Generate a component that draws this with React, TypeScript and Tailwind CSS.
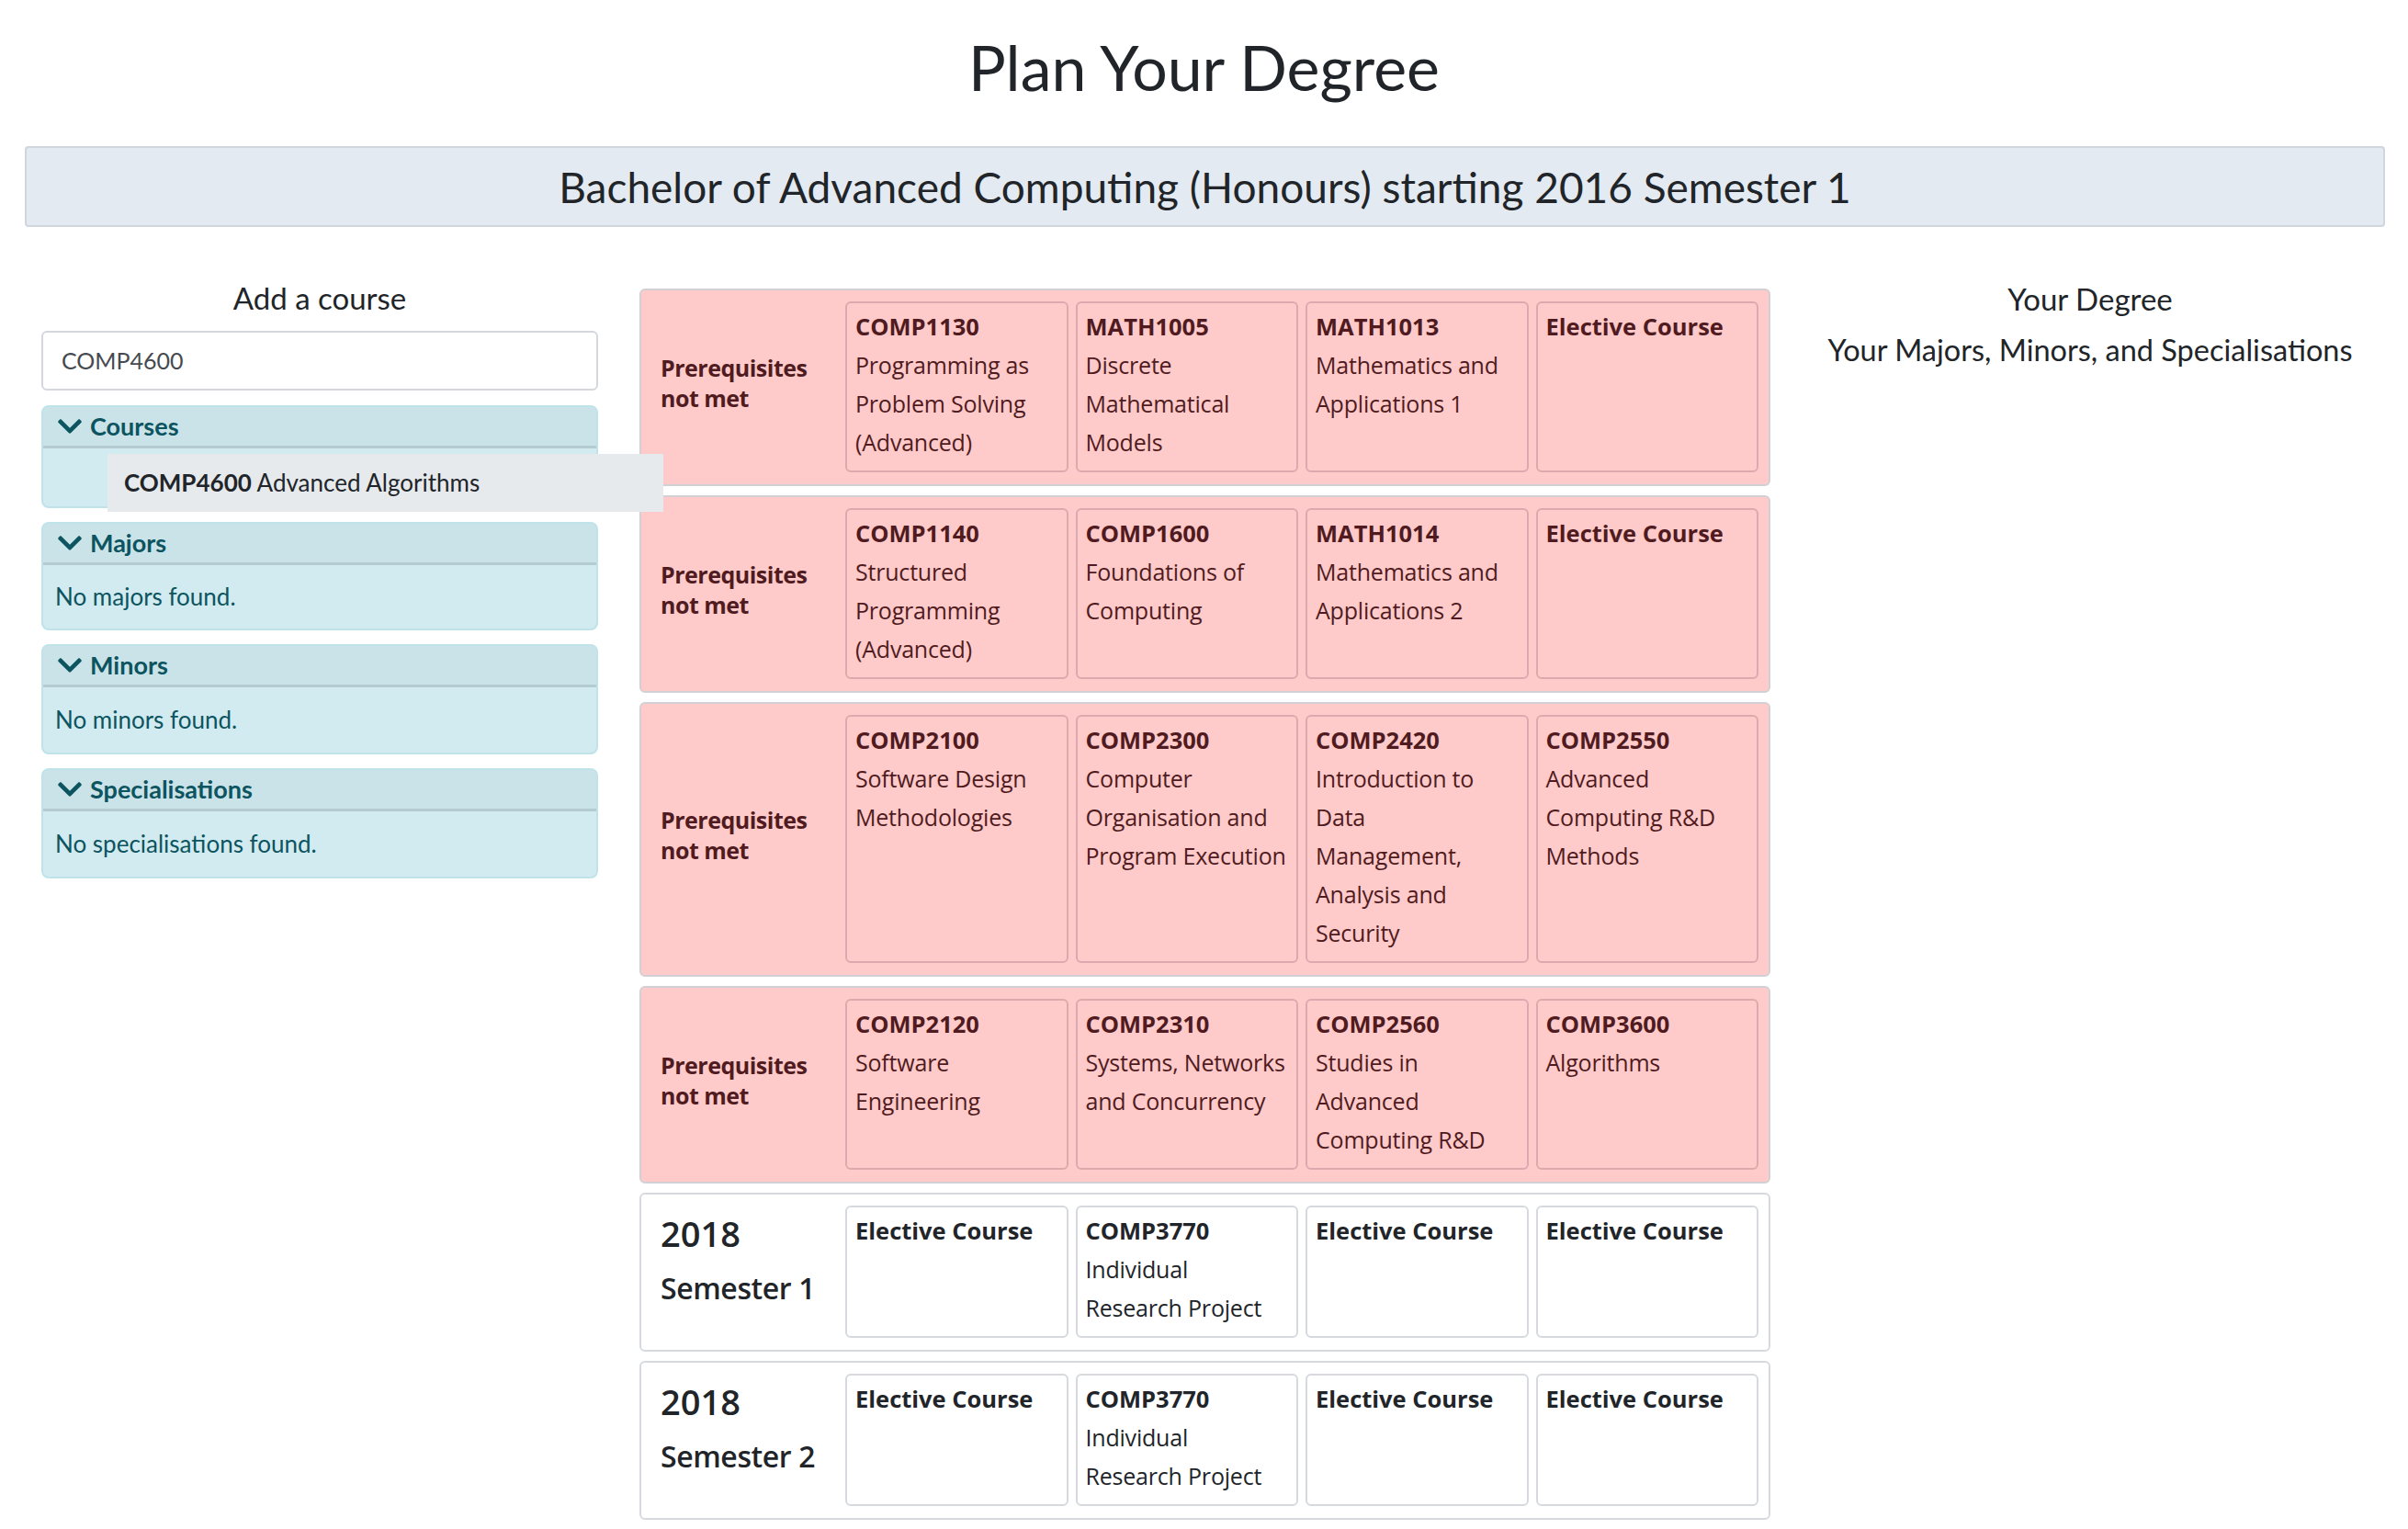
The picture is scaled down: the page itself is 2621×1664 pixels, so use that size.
import type { ReactNode } from 'react';
import { FaChevronDown } from 'react-icons/fa';

type Course = { code: string; lines?: string[] };
type Term = { warn: boolean; year?: string; semester?: string; courses: Course[] };

const ELECTIVE: Course = { code: 'Elective Course' };
const IRP: Course = { code: 'COMP3770', lines: ['Individual', 'Research Project'] };

const terms: Term[] = [
  {
    warn: true,
    courses: [
      { code: 'COMP1130', lines: ['Programming as', 'Problem Solving', '(Advanced)'] },
      { code: 'MATH1005', lines: ['Discrete', 'Mathematical', 'Models'] },
      { code: 'MATH1013', lines: ['Mathematics and', 'Applications 1'] },
      ELECTIVE,
    ],
  },
  {
    warn: true,
    courses: [
      { code: 'COMP1140', lines: ['Structured', 'Programming', '(Advanced)'] },
      { code: 'COMP1600', lines: ['Foundations of', 'Computing'] },
      { code: 'MATH1014', lines: ['Mathematics and', 'Applications 2'] },
      ELECTIVE,
    ],
  },
  {
    warn: true,
    courses: [
      { code: 'COMP2100', lines: ['Software Design', 'Methodologies'] },
      { code: 'COMP2300', lines: ['Computer', 'Organisation and', 'Program Execution'] },
      { code: 'COMP2420', lines: ['Introduction to', 'Data', 'Management,', 'Analysis and', 'Security'] },
      { code: 'COMP2550', lines: ['Advanced', 'Computing R&D', 'Methods'] },
    ],
  },
  {
    warn: true,
    courses: [
      { code: 'COMP2120', lines: ['Software', 'Engineering'] },
      { code: 'COMP2310', lines: ['Systems, Networks', 'and Concurrency'] },
      { code: 'COMP2560', lines: ['Studies in', 'Advanced', 'Computing R&D'] },
      { code: 'COMP3600', lines: ['Algorithms'] },
    ],
  },
  { warn: false, year: '2018', semester: 'Semester 1', courses: [ELECTIVE, IRP, ELECTIVE, ELECTIVE] },
  { warn: false, year: '2018', semester: 'Semester 2', courses: [ELECTIVE, IRP, ELECTIVE, ELECTIVE] },
];

function TermRow({ term }: { term: Term }) {
  const { warn } = term;
  return (
    <div
      className={`flex rounded-[6px] border-2 pt-[12px] pb-[13px] pr-[11px] font-['Open_Sans',sans-serif] ${
        warn ? 'border-[#d2d0d4] bg-[#ffcaca] text-[#4f1b20]' : 'border-[#d6d9dd] bg-white text-[#212529]'
      }`}
    >
      <div className={`w-[222px] shrink-0 pl-[21px] ${warn ? 'flex items-center pb-[8px]' : ''}`}>
        {warn ? (
          <div className="text-[25px] font-bold leading-[33px] tracking-[-0.5px]">
            Prerequisites
            <br />
            not met
          </div>
        ) : (
          <div className="pt-[7px] font-semibold">
            <div className="text-[38px] leading-[46px]">{term.year}</div>
            <div className="mt-[18px] text-[32px] leading-[38px] tracking-[-0.4px]">{term.semester}</div>
          </div>
        )}
      </div>
      <div className="grid flex-1 grid-cols-4 gap-[8px]">
        {term.courses.map((c, i) => (
          <div
            key={i}
            className={`rounded-[6px] border-2 px-[9px] pt-[4px] pb-[10px] text-[25px] leading-[42px] ${
              warn ? 'border-[#dcaaae]' : 'border-[#d6d9dd]'
            }`}
          >
            <div className="text-[25.5px] font-bold">{c.code}</div>
            {c.lines?.map((l) => (
              <div key={l} className="whitespace-nowrap tracking-[-0.2px]">
                {l}
              </div>
            ))}
          </div>
        ))}
      </div>
    </div>
  );
}

function Panel({ title, bodyClass, children }: { title: string; bodyClass: string; children?: ReactNode }) {
  return (
    <div className="rounded-[8px] border-2 border-[#bfe3e9] bg-[#d1ebf0] text-[#0c5460]">
      <div className="flex h-[45px] items-center gap-[7px] rounded-t-[6px] border-b-[3px] border-[#b4ccd1] bg-[#c9e3e8] pl-[14px] text-[27px] font-bold">
        <FaChevronDown size={30} />
        {title}
      </div>
      <div className={`relative flex items-center px-[13px] text-[26px] ${bodyClass}`}>{children}</div>
    </div>
  );
}

export default function App() {
  return (
    <div className="min-h-screen bg-white font-['Lato',sans-serif] text-[#212529]">
      <h1 className="pt-[32px] text-center text-[68px] leading-[82px]">Plan Your Degree</h1>

      <div className="mt-[45px] ml-[27px] mr-[25px] flex h-[88px] items-center justify-center rounded-[4px] border-2 border-[#d0d6dc] bg-[#e3eaf1] text-[46px]">
        Bachelor of Advanced Computing (Honours) starting 2016 Semester 1
      </div>

      <div className="mt-[59px] grid grid-cols-[606px_1fr_606px] items-start gap-x-[45px] pl-[45px] pr-[43px]">
        {/* search + results */}
        <div>
          <h5 className="text-center text-[33px] leading-[37px]">Add a course</h5>
          <div className="mt-[17px] flex h-[65px] items-center rounded-[6px] border-2 border-[#d4d8dd] px-[20px] text-[25px] text-[#454a50]">
            COMP4600
          </div>
          <div className="mt-[16px] flex flex-col gap-[15px]">
            <Panel title="Courses" bodyClass="h-[63px]">
              <div className="absolute left-[70px] top-[6px] z-10 flex h-[63px] w-[605px] items-center bg-[#e6eaed] pl-[18px] text-[26px] text-[#212529]">
                <span className="font-bold">COMP4600</span>&nbsp;Advanced Algorithms
              </div>
            </Panel>
            <Panel title="Majors" bodyClass="h-[69px]">
              No majors found.
            </Panel>
            <Panel title="Minors" bodyClass="h-[71px]">
              No minors found.
            </Panel>
            <Panel title="Specialisations" bodyClass="h-[71px]">
              No specialisations found.
            </Panel>
          </div>
        </div>

        {/* plan */}
        <div className="space-y-[10px] pt-[8px]">
          {terms.map((t, i) => (
            <TermRow key={i} term={t} />
          ))}
        </div>

        {/* summary */}
        <div className="text-center">
          <h5 className="text-[33px] leading-[38px]">Your Degree</h5>
          <h5 className="mt-[18px] text-[32.5px] leading-[37px]">Your Majors, Minors, and Specialisations</h5>
        </div>
      </div>
    </div>
  );
}
